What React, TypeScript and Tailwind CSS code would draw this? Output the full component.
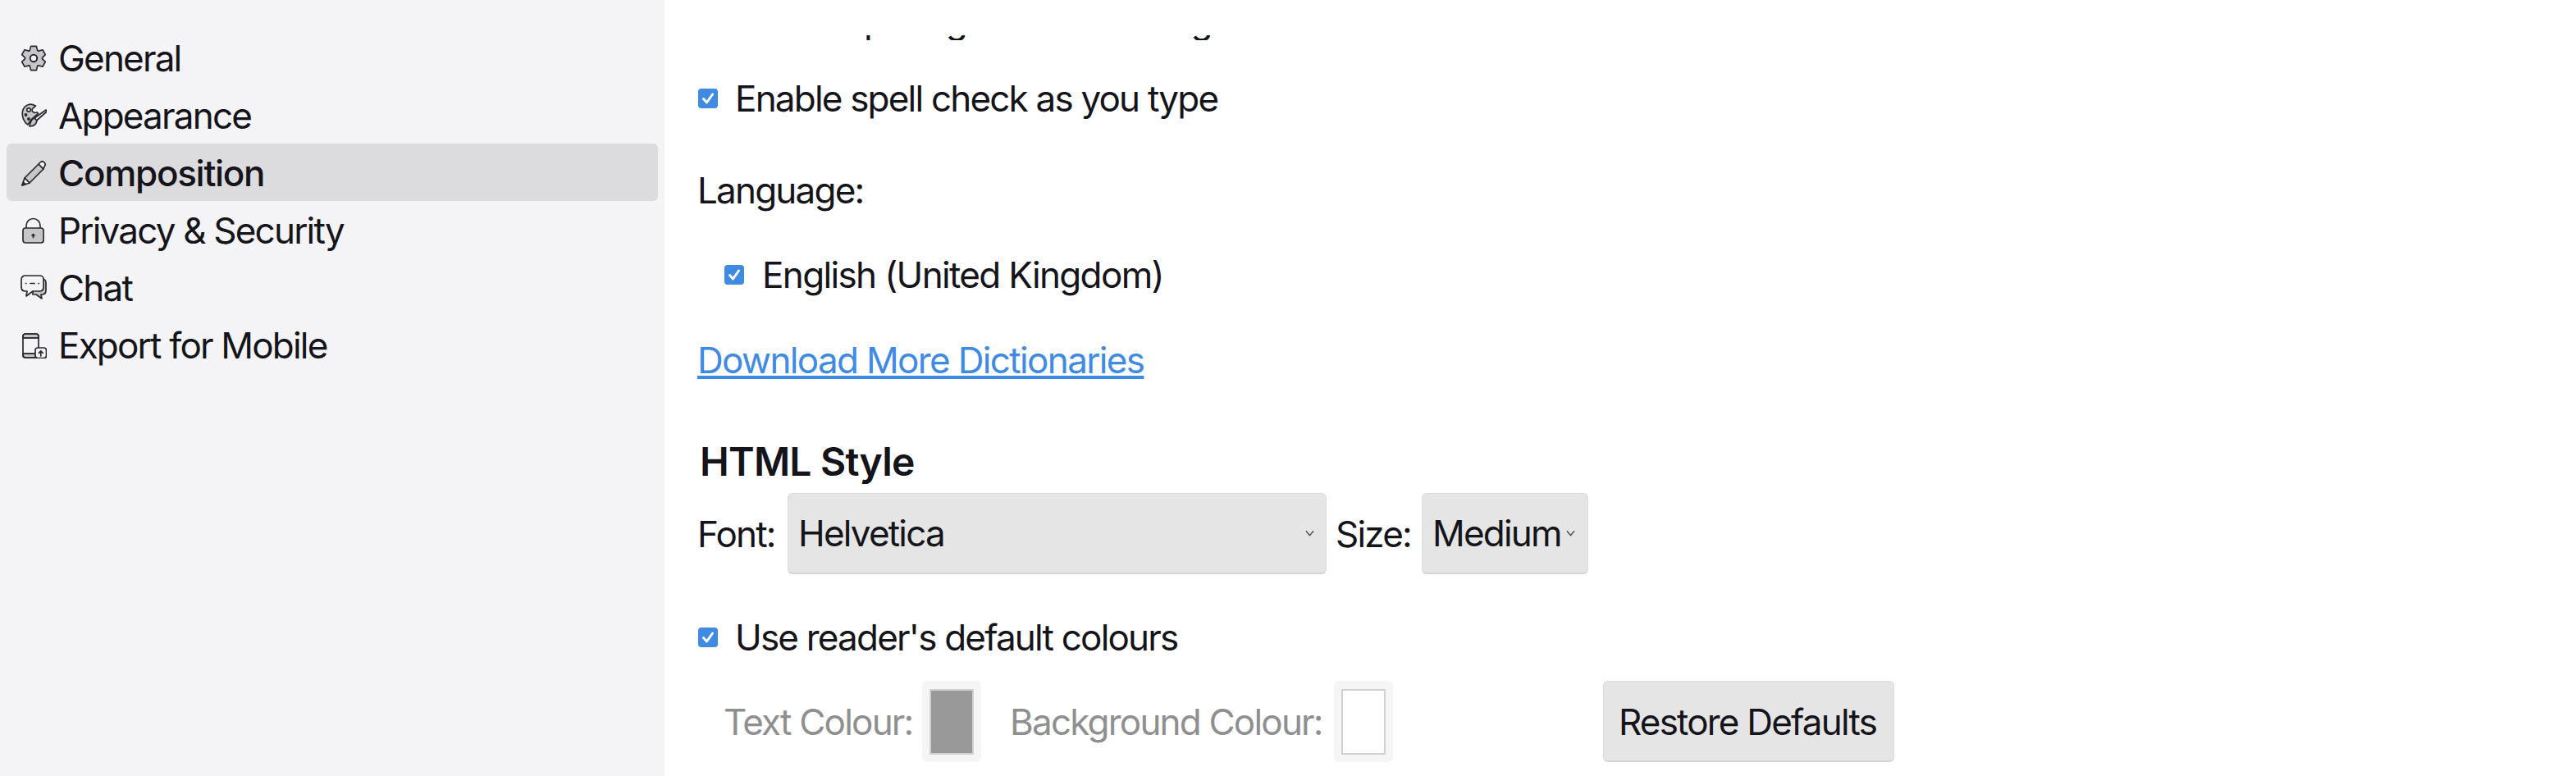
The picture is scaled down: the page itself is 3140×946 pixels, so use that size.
import type { ReactNode } from 'react'

const ICON_FILL = '#c6c6c9'
const INK = '#2a2a2e'

function Svg({ children }: { children: ReactNode }) {
  return (
    <svg viewBox="0 0 32 32" className="w-[32px] h-[32px] shrink-0" fill="none" stroke={INK} strokeWidth="1.700" strokeLinejoin="round" strokeLinecap="round">
      {children}
    </svg>
  )
}

// six teeth: top, bottom and the four diagonals
function gearPath() {
  const pt = (r: number, deg: number) => {
    const a = (deg * Math.PI) / 180
    return `${(16 + r * Math.cos(a)).toFixed(2)} ${(16 + r * Math.sin(a)).toFixed(2)}`
  }
  let d = ''
  for (let i = 0; i < 6; i++) {
    const c = -90 + i * 60
    d += `${i === 0 ? 'M' : 'L'}${pt(10.500, c - 27)} L${pt(15, c - 13)} L${pt(15, c + 13)} L${pt(10.500, c + 27)} `
  }
  return d + 'Z'
}

function GearIcon() {
  return (
    <Svg>
      <path fill={ICON_FILL} d={gearPath()} />
      <circle cx="16" cy="16" r="4.200" fill="#f4f4f6" strokeWidth="2" />
    </Svg>
  )
}

function PaletteIcon() {
  return (
    <Svg>
      <path fill={ICON_FILL} d="M18 4C12 0 4 3 2.500 11c-1 6 1.500 13 6.500 16l4-6 8-7c1-1 0-2-1-2-3 1-6 0-6-3 0-2 3-3 4.500-5z" />
      <circle cx="10" cy="9" r="2.200" fill="#f4f4f6" />
      <circle cx="6.500" cy="15" r="1.100" fill={INK} />
      <circle cx="10" cy="20" r="1.100" fill={INK} />
      <path fill="#f4f4f6" d="M31 9 17 19l2.500 3L32 11z" />
      <path fill={ICON_FILL} d="M17 19c-3 1-5 4-6 10 4 0 8-2 9-7z" />
    </Svg>
  )
}

function PencilIcon() {
  return (
    <Svg>
      <path fill={ICON_FILL} d="M5 22 22 5l6 6-17 17z" />
      <path fill="#f4f4f6" d="M22 5l2-2c1.500-1.500 3.500-1.500 5 0s1.500 3.500 0 5l-1 3z" />
      <path fill="#f4f4f6" d="M5 22 2 31l9-3z" />
      <path fill={INK} d="M3.300 27 2 31l4-1.300z" />
    </Svg>
  )
}

function LockIcon() {
  return (
    <Svg>
      <path d="M7 13V10c0-5 4-8.500 8.500-8.500S24 5 24 10v3" />
      <rect x="3" y="13" width="25" height="18" rx="3" fill={ICON_FILL} />
      <path d="M15.500 20.500v4M14 22l1.500-1.500L17 22" />
    </Svg>
  )
}

function ChatIcon() {
  return (
    <Svg>
      <path fill={ICON_FILL} d="M26 5c3 0 5 2 5 5v9c0 3-2 5-5 5h-1l1 5-7-5h-4V5z" />
      <path fill="#f4f4f6" d="M6 1h17c3 0 5 2 5 4v10c0 3-2 5-5 5h-8l-8 6 1-6H6c-3 0-5-2-5-5V6c0-3 2-5 5-5z" />
      <path d="M6.500 10.500h.4M12 10.500h5M22 10.500h.4" />
    </Svg>
  )
}

function MobileIcon() {
  return (
    <Svg>
      <path fill={ICON_FILL} d="M3 26h15v5H6c-2 0-3-1-3-3zM3 5c0-2 1-3 3-3h13c2 0 3 1 3 3v2H3z" />
      <path d="M22 19V5c0-2-1-3-3-3H6C4 2 3 3 3 5v23c0 2 1 3 3 3h12M3 7h19M3 26h15" />
      <rect x="18" y="19" width="13.500" height="12.500" rx="3" fill="#f4f4f6" />
      <path d="M24.750 29v-6M22.300 25.300l2.450-2.450 2.450 2.450" />
    </Svg>
  )
}

const NAV_ITEMS: { label: string; icon: ReactNode; active?: boolean }[] = [
  { label: 'General', icon: <GearIcon /> },
  { label: 'Appearance', icon: <PaletteIcon /> },
  { label: 'Composition', icon: <PencilIcon />, active: true },
  { label: 'Privacy & Security', icon: <LockIcon /> },
  { label: 'Chat', icon: <ChatIcon /> },
  { label: 'Export for Mobile', icon: <MobileIcon /> },
]

function Checkbox() {
  return (
    <span className="w-[24px] h-[24px] rounded-[4px] bg-[#3f8ae2] flex items-center justify-center shrink-0">
      <svg viewBox="0 0 24 24" className="w-[24px] h-[24px]" fill="none" stroke="white" strokeWidth="3" strokeLinecap="round" strokeLinejoin="round">
        <path d="M6.500 12.500l4 4.500 7-10" />
      </svg>
    </span>
  )
}

function Chevron() {
  return (
    <svg viewBox="0 0 12 8" className="w-[11px] h-[8px] shrink-0" fill="none" stroke="#444" strokeWidth="1.300">
      <path d="M1 1l5 6 5-6" />
    </svg>
  )
}

function Swatch({ color }: { color: string }) {
  return (
    <span className="w-[72px] h-[99px] rounded-[6px] bg-[#f5f5f5] flex items-center justify-center shrink-0">
      <span className={`w-[54px] h-[80px] border-2 border-[#d0d0d0] ${color}`} />
    </span>
  )
}

const CONTROL_CLS = 'h-[99px] rounded-[6px] bg-[#e5e5e5] border border-[#dcdcdc] border-b-2 border-b-[#d4d4d4]'

export default function App() {
  return (
    <div className="flex w-[3140px] h-[946px] overflow-hidden bg-white text-[#15141a] text-[44px] tracking-[-1.8px] font-['Inter',sans-serif]">
      <aside className="w-[810px] h-full shrink-0 bg-[#f4f4f6] pt-[35px] pl-[8px] pr-[8px]">
        <ul className="flex flex-col">
          {NAV_ITEMS.map((item) => (
            <li
              key={item.label}
              className={`h-[70px] pt-[2px] flex items-center gap-[14px] pl-[17px] rounded-[6px] ${item.active ? 'bg-[#dcdcde] font-medium tracking-[-1.3px]' : ''}`}
            >
              {item.icon}
              <span>{item.label}</span>
            </li>
          ))}
        </ul>
      </aside>

      <main className="flex-1 pl-[40px] pt-[43px]">
        {/* row scrolled out of view, only the descenders show */}
        <div className="h-[6px] overflow-hidden pl-[47px]">
          <div className="mt-[-50px] leading-[64px]">Check spelling before sending</div>
        </div>

        <label className="mt-[43px] h-[56px] flex items-center gap-[21px] pl-[1px]">
          <Checkbox />
          <span>Enable spell check as you type</span>
        </label>

        <div className="mt-[56px] h-[56px] flex items-center">Language:</div>

        <label className="mt-[47px] h-[56px] flex items-center gap-[22px] pl-[33px] tracking-[-1.65px]">
          <Checkbox />
          <span>English (United Kingdom)</span>
        </label>

        <a href="#" className="block mt-[48px] h-[56px] leading-[56px] w-fit text-[#3f8ae2] underline tracking-[-1.65px]">
          Download More Dictionaries
        </a>

        <h2 className="mt-[66px] h-[60px] leading-[60px] pl-[3px] text-[48px] tracking-[-0.8px] font-semibold">HTML Style</h2>

        <div className="mt-[8px] flex items-center">
          <span className="w-[110px]">Font:</span>
          <div className={`w-[657px] flex items-center justify-between pl-[12px] pr-[14px] ${CONTROL_CLS}`}>
            <span>Helvetica</span>
            <Chevron />
          </div>
          <span className="ml-[11px] w-[105px]">Size:</span>
          <div className={`w-[203px] flex items-center justify-between pl-[12px] pr-[15px] ${CONTROL_CLS}`}>
            <span>Medium</span>
            <Chevron />
          </div>
        </div>

        <label className="mt-[49px] h-[56px] flex items-center gap-[21px] pl-[1px]">
          <Checkbox />
          <span>Use reader's default colours</span>
        </label>

        <div className="mt-[25px] flex items-center pl-[32px]">
          <span className="text-[#8f8f90] w-[242px]">Text Colour:</span>
          <Swatch color="bg-[#999999]" />
          <span className="ml-[35px] text-[#8f8f90] w-[395px]">Background Colour:</span>
          <Swatch color="bg-white" />
          <button className={`ml-[256px] w-[355px] pt-[2px] pr-[3px] ${CONTROL_CLS}`}>
            Restore Defaults
          </button>
        </div>
      </main>
    </div>
  )
}
